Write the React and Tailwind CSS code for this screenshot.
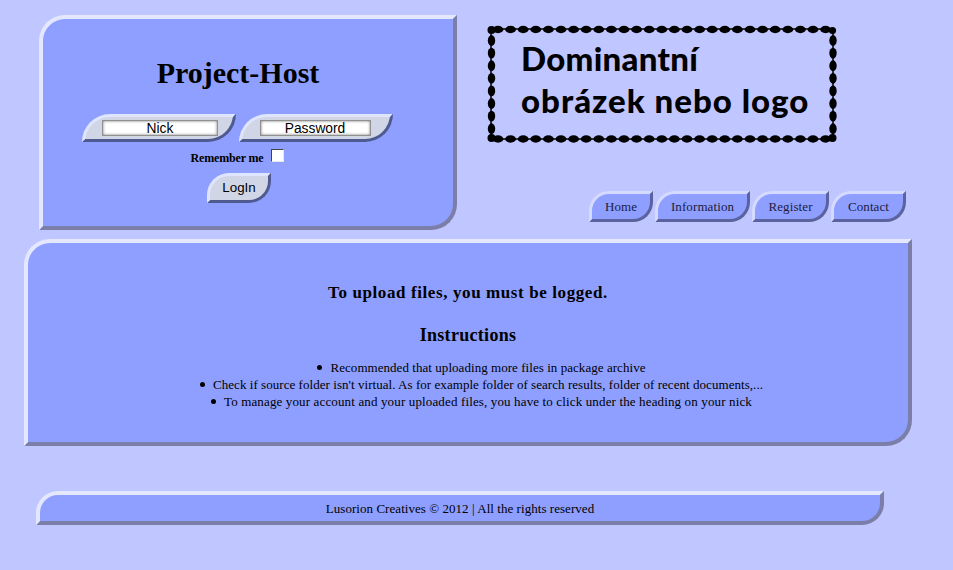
const serif = "font-['Liberation_Serif','Times_New_Roman',serif]";

function Field({ outer, inner, label }) {
  return (
    <div className={`${outer} h-[28px] flex items-center justify-center border-[3px] border-t-[#dfe4ff] border-l-[#dfe4ff] border-r-[#4f5a90] border-b-[#4f5a90] rounded-tl-[28px] rounded-br-[28px] bg-[#d0d6e6]`}>
      <div className={`${inner} h-[16px] pt-[1px] bg-white border border-[#909090] shadow-[inset_0_0_3px_#777777] flex items-center justify-center text-[13.8px] leading-none text-black font-['Liberation_Sans',Arial,sans-serif]`}>
        {label}
      </div>
    </div>
  );
}

function NavItem({ width, label }) {
  return (
    <a className={`${width} h-[31px] flex items-center justify-center border-[3px] border-t-[#d5daff] border-l-[#d5daff] border-r-[#5a639e] border-b-[#5a639e] rounded-tl-[20px] rounded-br-[20px] bg-[#8e9fff] text-[13px] tracking-[0.1px] text-[#1c1c40]`}>
      {label}
    </a>
  );
}

function LogoFrame() {
  const top = Array.from({ length: 27 }, (_, i) => 11 + i * 12.6);
  const side = Array.from({ length: 8 }, (_, i) => 15.5 + i * 12.6);
  return (
    <svg className="absolute inset-0" width="350" height="118" viewBox="0 0 350 118" fill="#000">
      <path d="M4 4 H346 V114 H4 Z" fill="none" stroke="#000" strokeWidth="1.5" />
      {top.map((x) => (
        <g key={x}>
          <ellipse cx={x} cy="4.5" rx="5.4" ry="3.7" />
          <ellipse cx={x} cy="114" rx="5.4" ry="3.7" />
        </g>
      ))}
      {side.map((y) => (
        <g key={y}>
          <ellipse cx="4.5" cy={y} rx="3.7" ry="5.4" />
          <ellipse cx="346" cy={y} rx="3.7" ry="5.4" />
        </g>
      ))}
      <circle cx="4.5" cy="5" r="4" />
      <circle cx="345.5" cy="5.5" r="3.6" />
      <circle cx="4.5" cy="113" r="4" />
      <circle cx="345.5" cy="113" r="4" />
    </svg>
  );
}

const Bullet = () => <span className="inline-block w-[5px] h-[5px] rounded-full bg-black mr-[8px] align-[2px]" />;

export default function App() {
  return (
    <div className={`w-[953px] h-[570px] overflow-hidden bg-[#c0c6ff] text-black ${serif}`}>
      <div className="flex h-[239px]">
        <div className="ml-[39px] mt-[15px] w-[418px] h-[215px] shrink-0 pr-[20px] border-4 border-t-[#e4e8ff] border-l-[#e4e8ff] border-r-[#7a7ea8] border-b-[#7a7ea8] rounded-tl-[26px] rounded-br-[26px] bg-[#8e9fff] flex flex-col items-center">
          <h1 className="mt-[35px] h-[37px] text-[30px] leading-[37px] font-bold">Project-Host</h1>
          <div className="mt-[23px] flex gap-[3px] -ml-[1px]">
            <Field outer="w-[154px] pl-[2px]" inner="w-[116px]" label="Nick" />
            <Field outer="w-[154px] pr-[2px]" inner="w-[111px]" label="Password" />
          </div>
          <div className="mt-[5px] h-[17px] flex items-center text-[12px] font-bold -ml-[2px]">
            <span className="tracking-[-0.15px] mt-[5px]">Remember me</span>
            <span className="ml-[7px] w-[13px] h-[13px] bg-white border border-t-[#444444] border-l-[#444444] border-r-[#e8e8e8] border-b-[#e8e8e8]" />
          </div>
          <button className="mt-[9px] ml-[2px] w-[64px] h-[30px] border-[3px] border-t-[#dfe4ff] border-l-[#dfe4ff] border-r-[#4f5a90] border-b-[#4f5a90] rounded-tl-[22px] rounded-br-[22px] bg-[#d0d6e6] text-[13.33px] text-black font-['Liberation_Sans',Arial,sans-serif]">
            LogIn
          </button>
        </div>
        <div className="ml-[30px] flex-1 flex flex-col">
          <div className="relative mt-[25px] w-[350px] h-[118px] pl-[34px] pt-[12px] font-['Lato',sans-serif] font-black text-[33px] leading-[42px]">
            <LogoFrame />
            <div className="tracking-[0.3px]">Dominantní</div>
            <div className="tracking-[1px]">obrázek nebo logo</div>
          </div>
          <nav className="mt-[48px] ml-[102px] flex gap-[2px]">
            <NavItem width="w-[64px]" label="Home" />
            <NavItem width="w-[95px]" label="Information" />
            <NavItem width="w-[77px]" label="Register" />
            <NavItem width="w-[75px]" label="Contact" />
          </nav>
        </div>
      </div>
      <main className="ml-[24px] w-[888px] h-[207px] border-4 border-t-[#e4e8ff] border-l-[#e4e8ff] border-r-[#7a7ea8] border-b-[#7a7ea8] rounded-tl-[26px] rounded-br-[26px] bg-[#8e9fff] flex flex-col items-center">
        <h3 className="mt-[40px] text-[17px] leading-[20px] font-bold tracking-[0.6px]">To upload files, you must be logged.</h3>
        <h3 className="mt-[21px] text-[18px] leading-[22px] font-bold tracking-[0.3px]">Instructions</h3>
        <ul className="mt-[13px] pl-[27px] text-[13px] leading-[17px] tracking-[0.05px] text-center">
          <li><Bullet />Recommended that uploading more files in package archive</li>
          <li><Bullet />Check if source folder isn't virtual. As for example folder of search results, folder of recent documents,...</li>
          <li className="tracking-[0.14px]"><Bullet />To manage your account and your uploaded files, you have to click under the heading on your nick</li>
        </ul>
      </main>
      <footer className="mt-[45px] ml-[36px] w-[848px] h-[34px] pt-[2px] border-4 border-t-[#e4e8ff] border-l-[#e4e8ff] border-r-[#7a7ea8] border-b-[#7a7ea8] rounded-tl-[22px] rounded-br-[22px] bg-[#8e9fff] flex items-center justify-center text-[13px] tracking-[0.05px]">
        Lusorion Creatives © 2012 | All the rights reserved
      </footer>
    </div>
  );
}
